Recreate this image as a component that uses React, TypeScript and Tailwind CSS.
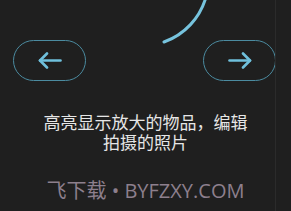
import React from 'react';

const Arrow: React.FC<{ dir: 'left' | 'right' }> = ({ dir }) => (
  <svg
    width="24"
    height="17"
    viewBox="0 0 24 17"
    fill="none"
    stroke="#6fc0dc"
    strokeWidth="2.6"
    strokeLinecap="round"
    strokeLinejoin="round"
    className={dir === 'right' ? 'rotate-180' : ''}
  >
    <path d="M2 8.5H22.5" />
    <path d="M9 1.5L2 8.5L9 15.5" />
  </svg>
);

const App: React.FC = () => {
  return (
    <div
      className="relative w-[291px] h-[211px] overflow-hidden bg-[#1f1f1f]"
      style={{ fontFamily: '"Open Sans", "Noto Sans CJK SC", sans-serif' }}
    >
      {/* magnifier edge */}
      <svg className="absolute left-0 top-0" width="291" height="50" fill="none">
        <path
          d="M206 -3 A 67 67 0 0 1 164 42"
          stroke="#76c3dd"
          strokeWidth="3"
          strokeLinecap="round"
        />
      </svg>
      {/* divider on the right */}
      <div className="absolute left-[275px] top-0 h-full w-px bg-[#2b2b2b]" />

      <div className="flex justify-between pl-[13px] pr-[15px] pt-[40px]">
        <button className="w-[73px] h-[41px] rounded-full border border-[#4b8ba0] flex items-center justify-center">
          <Arrow dir="left" />
        </button>
        <button className="w-[73px] h-[41px] rounded-full border border-[#4b8ba0] flex items-center justify-center">
          <Arrow dir="right" />
        </button>
      </div>

      <div
        className="mt-[31px] flex flex-col items-center text-[17px] leading-[20px] text-[#e6e6e6]"
        style={{ fontFamily: '"Noto Sans CJK SC", sans-serif' }}
      >
        <span>高亮显示放大的物品，编辑</span>
        <span>拍摄的照片</span>
      </div>

      <div className="mt-[27px] text-center text-[20px] leading-[24px] text-[#8d7f8d]">
        飞下载 • BYFZXY.COM
      </div>
    </div>
  );
};

export default App;
